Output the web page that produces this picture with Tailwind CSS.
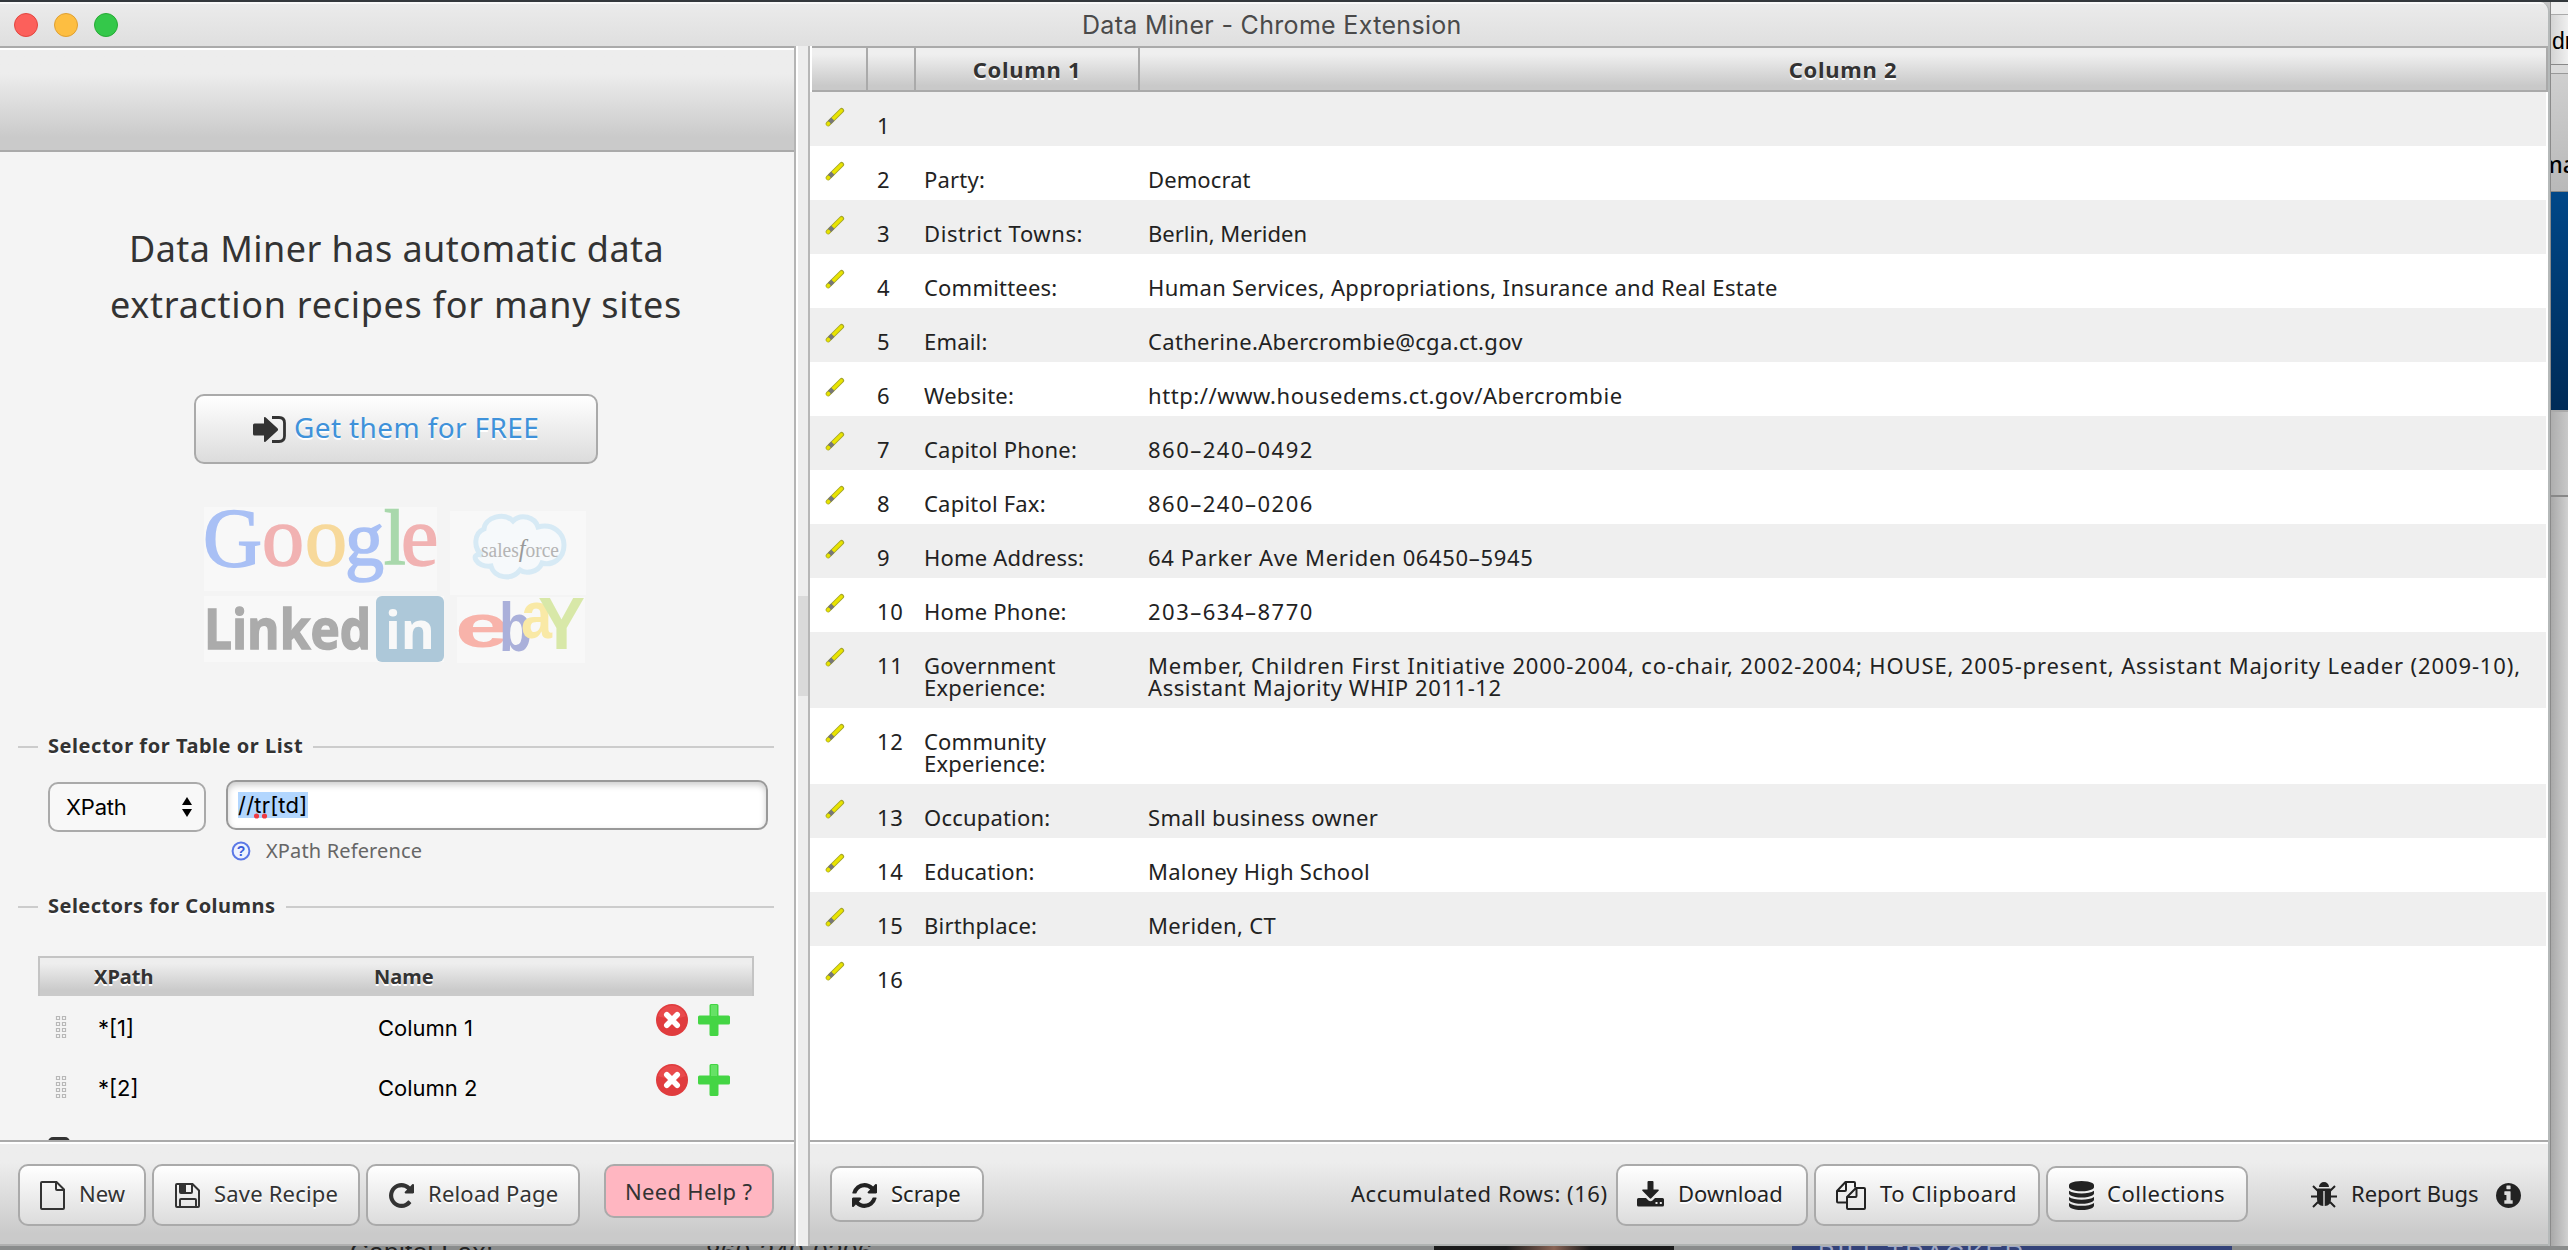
<!DOCTYPE html>
<html lang="en">
<head>
<meta charset="utf-8">
<title>Data Miner - Chrome Extension</title>
<script src="https://cdn.jsdelivr.net/npm/@tailwindcss/browser@4"></script>
</head>
<body class="relative flex h-[1250px] w-[2568px] flex-col overflow-hidden bg-[#33383c] font-['Noto_Sans',sans-serif] text-[22px] leading-[30px] text-[#333]">
<svg class="hidden">
  <symbol id="pencil" viewBox="0 0 20 20">
    <path d="M3.2 16.8L16.6 3.4" stroke="#a5a528" stroke-width="5" stroke-linecap="round" />
    <path d="M7 13L16.4 3.6" stroke="#e9e400" stroke-width="3.2" stroke-linecap="round" />
    <path d="M4.6 15.4L7.8 12.2" stroke="#777" stroke-width="4.6" />
    <path d="M3 17L3.6 16.4" stroke="#e6e200" stroke-width="3.2" stroke-linecap="round" />
  </symbol>
  <symbol id="remove" viewBox="0 0 32 32">
    <circle cx="16" cy="16" r="16" fill="#e03c3e" />
    <path d="M2 12a14.6 14.6 0 0 1 28 0Q16 18 2 12z" fill="#ee5457" opacity=".6" />
    <path d="M10.800 10.800l10.400 10.400M21.200 10.800L10.800 21.200" stroke="#fff" stroke-width="5.600" stroke-linecap="round" />
  </symbol>
  <symbol id="add" viewBox="0 0 32 32">
    <path d="M13 0h6q1.500 0 1.500 1.500v10h10q1.500 0 1.500 1.500v6q0 1.500-1.500 1.500h-10v10q0 1.500-1.500 1.500h-6q-1.500 0-1.500-1.500v-10h-10q-1.500 0-1.500-1.500v-6q0-1.500 1.500-1.500h10v-10q0-1.500 1.500-1.500z" fill="#44d544" />
    <path d="M13 1h6v11h-6z" fill="#66e266" />
  </symbol>
  <symbol id="grip" viewBox="0 0 12 24">
    <g fill="#f8f8f8" stroke="#b8b8b8" stroke-width="1.200">
      <path d="M1.500 1.500h3v3h-3zM7.500 1.500h3v3h-3zM1.500 7.500h3v3h-3zM7.500 7.500h3v3h-3zM1.500 13.500h3v3h-3zM7.500 13.500h3v3h-3zM1.500 19.500h3v3h-3zM7.500 19.500h3v3h-3z" />
    </g>
  </symbol>
</svg>

<div class="mt-[2px] flex h-[1244px] shrink-0 bg-[#c4c4c4]">
  <!-- application window -->
  <div class="flex w-[2550px] shrink-0 flex-col overflow-hidden rounded-tr-[10px] border-r-2 border-[#b5b9b9] bg-[#ededed]">
    <div class="flex h-[44px] shrink-0 items-center border-t-2 border-[#f8f8f8] bg-linear-to-b from-[#ebebeb] to-[#dfdfdf] pl-[14px]">
      <div class="flex gap-4">
        <span class="size-6 rounded-full border border-[#e2463f] bg-[#fc605b]"></span>
        <span class="size-6 rounded-full border border-[#dfa032] bg-[#fdbe41]"></span>
        <span class="size-6 rounded-full border border-[#27aa35] bg-[#34c84a]"></span>
      </div>
      <div class="ml-[964px] font-['Inter',sans-serif] text-[25px] tracking-[0.32px] text-[#4a4a4a]">Data Miner - Chrome Extension</div>
    </div>

    <div class="flex h-[1200px] shrink-0">
      <!-- recipe pane -->
      <div class="flex w-[796px] shrink-0 flex-col border-r-2 border-[#b4b4b4] bg-[#f4f4f4]">
        <div class="h-[106px] shrink-0 border-y-2 border-[#aaa] bg-linear-to-b from-[#ededed] from-25% to-[#cacaca] to-88%"><div class="h-[2px] bg-white"></div></div>
        <div class="flex h-[988px] shrink-0 flex-col overflow-hidden">
          <div class="flex h-[228px] shrink-0 flex-col items-center pt-[69px] text-center text-[36px] leading-[56px]">
            <div class="w-[536px] whitespace-nowrap text-left tracking-[0.44px]">Data Miner has automatic data</div>
            <div class="w-[574px] whitespace-nowrap text-left tracking-[0.72px]">extraction recipes for many sites</div>
          </div>
          <div class="mt-[14px] ml-[194px] flex h-[70px] w-[404px] shrink-0 items-center rounded-[10px] border-2 border-[#aaa] bg-linear-to-b from-white to-[#dcdcdc] pl-[57px] [text-shadow:0_2px_0_#fff]">
            <svg class="h-[27px] w-[33px]" viewBox="0 0 33 27" fill="#333"><path d="M1.500 7.500h9.500V2q0-1.500 1.500-.8l12 11q1.200 1.300 0 2.600l-12 11q-1.500.700-1.500-.8v-5.500H1.500Q0 19.500 0 18V9q0-1.500 1.500-1.500z" /><path d="M19 1.500h7q5.500 0 5.500 5.500v13q0 5.500-5.500 5.500h-7" fill="none" stroke="#333" stroke-width="2.800" /></svg>
            <span class="ml-[8px] pb-1 text-[28px] tracking-[0.38px] whitespace-nowrap text-[#3f92da]">Get them for FREE</span>
          </div>

          <svg class="mt-[40px] ml-[200px] h-[164px] w-[390px] shrink-0" viewBox="200 504 390 164">
            <g fill="#f8f8f8"><path d="M204 507h233v84H204zM450 511h136v84H450zM204 596h240v66H204zM457 597h128v66H457z" /></g>
            <g font-family="Liberation Serif,serif" font-size="84" stroke-width="1.600">
              <text x="203" y="567" fill="#a9c0f5" stroke="#a9c0f5" textLength="59" lengthAdjust="spacingAndGlyphs" font-size="85">G</text>
              <text x="262" y="565" fill="#f1b2b2" stroke="#f1b2b2">o</text><text x="305" y="565" fill="#f7d99b" stroke="#f7d99b">o</text>
              <text x="345" y="565" fill="#a9c0f5" stroke="#a9c0f5" font-size="78">g</text><text x="384" y="564" fill="#a9d8ac" stroke="#a9d8ac" font-size="78">l</text>
              <text x="401" y="565" fill="#f1b2b2" stroke="#f1b2b2">e</text>
            </g>
            <path d="M482 552c-9-7-8-22 2-26c1-12 20-17 29-8c8-8 22-4 25 6c15-4 26 6 26 18c0 14-12 21-22 18c-4 10-17 11-22 7c-8 11-26 8-29-4c-15 2-22-14-9-11z" transform="translate(0 3)" fill="#f6f9fb" stroke="#d7eaf5" stroke-width="5" />
            <text x="481" y="557" font-family="Liberation Serif,serif" font-size="20" fill="#b4b4b4" textLength="78" lengthAdjust="spacingAndGlyphs">sales<tspan font-style="italic" font-size="25" fill="#999">f</tspan>orce</text>
            <text x="204" y="649" font-family="Open Sans,sans-serif" font-weight="700" font-size="55" fill="#ababab" stroke="#ababab" stroke-width="1.500" textLength="167" lengthAdjust="spacingAndGlyphs">Linked</text>
            <rect x="376" y="596" width="68" height="66" rx="6" fill="#adc8d9" />
            <text x="385" y="649" font-family="Open Sans,sans-serif" font-weight="700" font-size="52" fill="#f8f8f8" textLength="50" lengthAdjust="spacingAndGlyphs">in</text>
            <g font-family="Liberation Sans,sans-serif" font-weight="700">
              <text x="455" y="647" font-size="61" fill="#f8b3aa" textLength="54" lengthAdjust="spacingAndGlyphs">e</text>
              <text x="499" y="651" font-size="68" fill="#aab0da" textLength="33" lengthAdjust="spacingAndGlyphs">b</text>
              <text x="521" y="638" font-size="66" fill="#f9e9a6" textLength="31" lengthAdjust="spacingAndGlyphs">a</text>
              <text x="538" y="649" font-size="74" fill="#d8e8a8" textLength="47" lengthAdjust="spacingAndGlyphs">Y</text>
            </g>
          </svg>

          <div class="mt-[64px] ml-[18px] flex h-[30px] w-[756px] shrink-0 items-center text-[20px] font-bold">
            <span class="h-[2px] w-[20px] bg-[#ccc]"></span>
            <span class="mx-[10px] w-[255px] pb-[2px] tracking-[0.54px] whitespace-nowrap [text-shadow:0_2px_0_#fff]">Selector for Table or List</span>
            <span class="h-[2px] flex-1 bg-[#ccc]"></span>
          </div>
          <div class="mt-[18px] ml-[48px] flex shrink-0 font-['Inter',sans-serif] text-black">
            <div class="mt-[2px] flex h-[50px] w-[158px] items-center justify-between rounded-[10px] border-2 border-[#aaa] bg-[#f8f8f8] pr-[12px] pl-[16px] tracking-[-0.2px]">XPath
              <svg class="h-[20px] w-[10px]" viewBox="0 0 10 20"><path d="M5 0l5 8H0zM5 20l5-8H0z" /></svg>
            </div>
            <div class="ml-[20px] flex h-[50px] w-[542px] items-center rounded-[10px] border-2 border-[#999] bg-white pl-[10px] shadow-[inset_0_3px_6px_#ccc]">
              <span class="relative h-[26px] w-[70px] bg-[#b2d6fe] leading-[27px] whitespace-nowrap tracking-[0.2px]">//tr[td]<svg class="absolute top-[21px] left-[15px] h-[6px] w-[16px]" viewBox="0 0 16 6" fill="#ef3b42"><circle cx="3.500" cy="3" r="2.600" /><circle cx="11.500" cy="3" r="2.600" /></svg></span>
            </div>
          </div>
          <div class="mt-[4px] ml-[231px] flex h-[30px] shrink-0 items-center text-[20px] text-[#666]">
            <svg class="h-[20px] w-[20px]" viewBox="0 0 20 20"><circle cx="10" cy="10" r="8.400" fill="#eef3ff" stroke="#5b78e6" stroke-width="2" /><text x="10" y="15" text-anchor="middle" font-family="Liberation Sans,sans-serif" font-size="14" font-weight="700" fill="#3c5cd8">?</text></svg>
            <span class="ml-[15px] tracking-[0.14px]">XPath Reference</span>
          </div>
          <div class="mt-[26px] ml-[18px] flex h-[30px] w-[756px] shrink-0 items-center text-[20px] font-bold">
            <span class="h-[2px] w-[20px] bg-[#ccc]"></span>
            <span class="mx-[10px] w-[228px] pb-[2px] tracking-[0.46px] whitespace-nowrap [text-shadow:0_2px_0_#fff]">Selectors for Columns</span>
            <span class="h-[2px] flex-1 bg-[#ccc]"></span>
          </div>
          <div class="mt-[34px] ml-[38px] grid h-[40px] w-[716px] shrink-0 grid-cols-[280px_1fr] items-center border-2 border-b-0 border-[#c4c4c4] bg-linear-to-b from-[#eee] from-15% to-[#cacaca] to-85% pl-[54px] text-[20px] font-bold [text-shadow:0_2px_0_#fff]">
            <span>XPath</span><span>Name</span>
          </div>
          <div class="ml-[38px] flex h-[60px] w-[716px] shrink-0 items-start pl-[17px] font-['Inter',sans-serif] text-black">
            <svg class="mt-[19px] h-6 w-3"><use href="#grip" /></svg>
            <span class="mt-[17px] ml-[31px] w-[280px]">*[1]</span><span class="mt-[17px] w-[278px]">Column 1</span>
            <svg class="mt-2 size-8"><use href="#remove" /></svg><svg class="mt-2 ml-[10px] size-8"><use href="#add" /></svg>
          </div>
          <div class="ml-[38px] flex h-[60px] w-[716px] shrink-0 items-start pl-[17px] font-['Inter',sans-serif] text-black">
            <svg class="mt-[19px] h-6 w-3"><use href="#grip" /></svg>
            <span class="mt-[17px] ml-[31px] w-[280px]">*[2]</span><span class="mt-[17px] w-[278px]">Column 2</span>
            <svg class="mt-2 size-8"><use href="#remove" /></svg><svg class="mt-2 ml-[10px] size-8"><use href="#add" /></svg>
          </div>
          <div class="mt-[21px] ml-[48px] h-[24px] w-[22px] shrink-0 rounded-[5px] bg-[#333]"></div>
        </div>
        <div class="h-[106px] shrink-0 border-y-2 border-t-[#aaa] border-b-[#b0b0b0] bg-linear-to-b from-[#ededed] from-20% to-[#cacaca] to-90%">
          <div class="h-[2px] bg-white"></div>
          <div class="mt-[20px] flex pl-[18px] [text-shadow:0_2px_0_#fff]">
            <div class="flex h-[62px] w-[128px] items-center rounded-[10px] border-2 border-[#aaa] bg-linear-to-b from-white to-[#dcdcdc] pl-[20px]">
              <svg class="h-[29px] w-[25px]" viewBox="0 0 25 29" fill="none" stroke="#333" stroke-width="2"><path d="M2 1h14.500L24 8.500V27q0 1-1 1H2q-1 0-1-1V2q0-1 1-1zM16 1v7q0 1 1 1h7" /></svg>
              <span class="ml-[14px] pb-1">New</span>
            </div>
            <div class="ml-[6px] flex h-[62px] w-[208px] items-center rounded-[10px] border-2 border-[#aaa] bg-linear-to-b from-white to-[#dcdcdc] pl-[21px]">
              <svg class="h-[25px] w-[25px]" viewBox="0 0 25 25" fill="none" stroke="#333" stroke-width="2"><path d="M2 1h15.500L24 7.500V23q0 1-1 1H2q-1 0-1-1V2q0-1 1-1z" /><path d="M5 1v8q0 1 1 1h10q1 0 1-1V1M5 24v-7q0-1 1-1h14q1 0 1 1v7" /><path d="M5.500 1h5.500v8.500H5.500z" fill="#333" stroke="none" /></svg>
              <span class="ml-[14px] pb-1 tracking-[0.2px] whitespace-nowrap">Save Recipe</span>
            </div>
            <div class="ml-[6px] flex h-[62px] w-[214px] items-center rounded-[10px] border-2 border-[#aaa] bg-linear-to-b from-white to-[#dcdcdc] pl-[21px]">
              <svg class="h-[25px] w-[25px]" viewBox="128 128 1536 1536" fill="#333"><path d="M1664 256v448q0 26-19 45t-45 19h-448q-42 0-59-40-17-39 14-69l138-138q-148-137-349-137-104 0-198.500 40.500t-163.500 109.500-109.500 163.500-40.500 198.500 40.500 198.500 109.500 163.500 163.500 109.500 198.500 40.500q119 0 225-52t179-147q7-10 23-12 15 0 25 9l137 138q9 8 9.500 20.500t-7.500 22.500q-109 132-264 204.500t-327 72.500q-156 0-298-61t-245-164-164-245-61-298 61-298 164-245 245-164 298-61q147 0 284.500 55.500t244.500 156.500l130-129q29-31 70-14 39 17 39 59z" /></svg>
              <span class="ml-[14px] pb-1 tracking-[0.2px] whitespace-nowrap">Reload Page</span>
            </div>
            <div class="ml-[24px] flex h-[54px] w-[170px] items-center rounded-[10px] border-2 border-[#aaa] bg-[#ffb6c1] pl-[19px] [text-shadow:none]"><span class="tracking-[0.3px] whitespace-nowrap">Need Help ?</span></div>
          </div>
        </div>
      </div>

      <!-- splitter -->
      <div class="flex w-[14px] shrink-0 flex-col border-r-2 border-l-2 border-l-white border-r-[#b6b6b6] bg-[#ededed]">
        <div class="mt-[550px] h-[100px] bg-[#dadada]"></div>
      </div>

      <!-- results pane -->
      <div class="flex w-[1738px] shrink-0 flex-col bg-white">
        <div class="ml-[2px] grid h-[46px] w-[1736px] shrink-0 grid-cols-[56px_48px_224px_1fr] border-y-2 border-r-2 border-[#aaa] bg-linear-to-b from-[#efefef] from-15% to-[#c9c9c9] to-90% text-center font-bold leading-[43px] [text-shadow:0_2px_0_#fff]">
          <span class="border-r-2 border-[#aaa]"></span><span class="border-r-2 border-[#aaa]"></span>
          <span class="border-r-2 border-[#aaa] tracking-[0.7px]">Column 1</span><span class="tracking-[0.7px]">Column 2</span>
        </div>
        <div id="rows" class="h-[1048px] w-[1736px] shrink-0 overflow-hidden text-[#222]"></div>
        <div class="h-[106px] shrink-0 border-y-2 border-t-[#aaa] border-b-[#b0b3b2] bg-linear-to-b from-[#ededed] from-20% to-[#cacaca] to-90% text-[#222]">
          <div class="h-[2px] bg-white"></div>
          <div class="mt-[20px] flex h-[62px] items-center pl-[20px] [text-shadow:0_2px_0_#fff]">
            <div class="mb-[2px] flex h-[56px] w-[154px] items-center rounded-[10px] border-2 border-[#aaa] bg-linear-to-b from-white to-[#dcdcdc] pl-[20px]">
              <svg class="mt-[2px] h-[25px] w-[25px]" viewBox="128 128 1536 1536" fill="#222"><path d="M1639 1056q0 5-1 7-64 268-268 434.500t-478 166.500q-146 0-282.500-55t-243.500-157l-129 129q-19 19-45 19t-45-19-19-45v-448q0-26 19-45t45-19h448q26 0 45 19t19 45-19 45l-137 137q71 66 161 102t187 36q134 0 250-65t186-179q11-17 53-117 8-23 30-23h192q13 0 22.500 9.500t9.500 22.500zm25-800v448q0 26-19 45t-45 19h-448q-26 0-45-19t-19-45 19-45l138-138q-148-137-349-137-134 0-250 65t-186 179q-11 17-53 117-8 23-30 23h-199q-13 0-22.500-9.500t-9.500-22.500v-7q65-268 270-434.500t480-166.500q146 0 284 55.500t245 156.500l130-129q19-19 45-19t45 19 19 45z" /></svg>
              <span class="ml-[14px] pb-[2px]">Scrape</span>
            </div>
            <span class="ml-[367px] w-[256px] pb-1 tracking-[0.53px] whitespace-nowrap [text-shadow:none]">Accumulated Rows: (16)</span>
            <div class="ml-[9px] flex h-[62px] w-[192px] items-center rounded-[10px] border-2 border-[#aaa] bg-linear-to-b from-white to-[#dcdcdc] pl-[19px]">
              <svg class="mb-[3px] h-[26px] w-[27px]" viewBox="0 0 27 26" fill="#222"><path d="M10.500 1q0-1 1-1h4q1 0 1 1v7.500h4.700q1.200.3.400 1.300l-7.300 7.500q-.800.700-1.600 0L5.400 9.800q-.8-1 .4-1.300h4.700zM1.500 17h7.500l2.500 2.500q2 1.500 4 0L18 17h7.500q1.500 0 1.500 1.500V24q0 1.500-1.500 1.500h-24Q0 25.500 0 24v-5.500Q0 17 1.500 17z" /><path d="M18.500 21h2v2h-2zM22.800 21h2v2h-2z" fill="#ececec" /></svg>
              <span class="ml-[14px] pb-1">Download</span>
            </div>
            <div class="ml-[6px] flex h-[62px] w-[226px] items-center rounded-[10px] border-2 border-[#aaa] bg-linear-to-b from-white to-[#dcdcdc] pl-[20px]">
              <svg class="h-[29px] w-[30px]" viewBox="0 0 30 29" fill="none" stroke="#222" stroke-width="2" stroke-linejoin="round"><path d="M11 21.500H2q-1 0-1-1V10L9.500 1H18q1 0 1 1v4.500M10 1v8q0 1-1 1H1" /><path d="M20 7h8q1 0 1 1v19q0 1-1 1H12q-1 0-1-1V16zM20.500 7v8q0 1-1 1H11" /></svg>
              <span class="ml-[14px] pb-1 tracking-[0.6px] whitespace-nowrap">To Clipboard</span>
            </div>
            <div class="mb-[2px] ml-[6px] flex h-[56px] w-[202px] items-center rounded-[10px] border-2 border-[#aaa] bg-linear-to-b from-white to-[#dcdcdc] pl-[21px]">
              <svg class="mt-[3px] h-[29px] w-[25px]" viewBox="128 0 1536 1792" preserveAspectRatio="none" fill="#222"><path d="M896 768q237 0 443-43t325-127v170q0 69-103 128t-280 93.500-385 34.500-385-34.500-280-93.500-103-128v-170q119 84 325 127t443 43zm0 768q237 0 443-43t325-127v170q0 69-103 128t-280 93.500-385 34.500-385-34.500-280-93.500-103-128v-170q119 84 325 127t443 43zm0-384q237 0 443-43t325-127v170q0 69-103 128t-280 93.500-385 34.500-385-34.500-280-93.500-103-128v-170q119 84 325 127t443 43zm0-1152q208 0 385 34.500t280 93.500 103 128v128q0 69-103 128t-280 93.500-385 34.500-385-34.500-280-93.500-103-128v-128q0-69 103-128t280-93.500 385-34.500z" /></svg>
              <span class="ml-[13px] pb-[2px] tracking-[0.5px]">Collections</span>
            </div>
            <svg class="ml-[63px] h-[26px] w-[26px]" viewBox="0 0 26 26" fill="#222"><path d="M8 5a5 5 0 0 1 10 0zM6 7.500q0-1 1-1h12q1 0 1 1V17q0 7-6.300 7V9h-1.400v15Q6 24 6 17z" /><path d="M7 9L2 4M19 9l5-5M6 14.500H0M20 14.500h6M7 20l-5 5M19 20l5 5" stroke="#222" stroke-width="2" /></svg>
            <span class="ml-[14px] w-[127px] pb-1 whitespace-nowrap [text-shadow:none]">Report Bugs</span>
            <svg class="ml-[18px] h-[25px] w-[25px]" viewBox="128 128 1536 1536" fill="#222"><path d="M1152 1376v-160q0-14-9-23t-23-9h-96v-512q0-14-9-23t-23-9h-320q-14 0-23 9t-9 23v160q0 14 9 23t23 9h96v320h-96q-14 0-23 9t-9 23v160q0 14 9 23t23 9h448q14 0 23-9t9-23zm-128-896v-160q0-14-9-23t-23-9h-192q-14 0-23 9t-9 23v160q0 14 9 23t23 9h192q14 0 23-9t9-23zm640 416q0 209-103 385.500t-279.500 279.500-385.500 103-385.500-103-279.500-279.500-103-385.500 103-385.500 279.500-279.500 385.500-103 385.500 103 279.500 279.500 103 385.500z" /></svg>
          </div>
        </div>
      </div>
    </div>
  </div>

  <!-- browser window behind, right edge -->
  <div class="flex w-[18px] flex-col overflow-hidden border-l border-[#8b8b8b] bg-linear-to-r from-[#a9a9a9] to-[#d0d0d0] font-['Liberation_Sans',sans-serif] text-[23px] text-black">
    <div class="h-[13px] shrink-0 border-b border-[#aaa] bg-[#efefef]"></div>
    <div class="h-[50px] shrink-0 overflow-hidden border-b border-[#888] bg-linear-to-r from-[#d4d4d4] to-[#efefef] pt-[11px] pl-px whitespace-nowrap">dr</div>
    <div class="h-[9px] shrink-0 border-b border-[#999] bg-[#dadada]"></div>
    <div class="h-[118px] shrink-0 overflow-hidden border-b border-[#888] bg-linear-to-b from-[#cfcfcf] to-[#b9b9b9] pt-[75px] whitespace-nowrap"><span class="-ml-[10px] font-['Noto_Sans',sans-serif] font-medium">ma</span></div>
    <div class="h-[218px] shrink-0 bg-linear-to-b from-[#004788] to-[#002b57]"></div>
    <div class="h-[87px] shrink-0 border-t-2 border-b-2 border-t-[#aaa] border-b-[#888] bg-linear-to-r from-[#aeaeae] to-[#c8c8c8]"></div>
  </div>
</div>

<!-- page behind, bottom edge -->
<div class="flex h-[4px] shrink-0 items-start overflow-hidden bg-[#8a8c8c] font-['Liberation_Sans',sans-serif] text-[26px] leading-[26px] text-[#222]">
  <span class="-mt-[7px] ml-[350px] w-[356px] shrink-0 tracking-[0.4px]">Capitol Fax:</span>
  <span class="-mt-[7px] w-[378px] shrink-0 tracking-[0.4px]">860-240-0206</span>
  <span class="ml-[350px] h-full w-[240px] shrink-0 bg-linear-to-r from-[#1b1b1b] from-30% via-[#8a6455] to-[#1b1b1b] to-65%"></span>
  <span class="ml-[118px] flex h-full w-[440px] shrink-0 items-start overflow-hidden bg-[#334279] pl-[26px] text-[#a0a8c4]"><span class="-mt-[5px] tracking-[2px] whitespace-nowrap">BILL TRACKER</span></span>
</div>

<script>
const rows = [
  ["", ""], ["Party:", "Democrat", "tracking-[0.1px]"], ["District Towns:", "Berlin, Meriden", "tracking-[0px]"],
  ["Committees:", "Human Services, Appropriations, Insurance and Real Estate"],
  ["Email:", "Catherine.Abercrombie@cga.ct.gov"],
  ["Website:", "http://www.housedems.ct.gov/Abercrombie", "tracking-[0.58px]"],
  ["Capitol Phone:", "860–240–0492", "tracking-[1.5px]"], ["Capitol Fax:", "860–240–0206", "tracking-[1.5px]"],
  ["Home Address:", "64 Parker Ave Meriden 06450–5945", "tracking-[0.65px]"],
  ["Home Phone:", "203–634–8770", "tracking-[1.5px]"],
  ["Government Experience:", "Member, Children First Initiative 2000-2004, co-chair, 2002-2004; HOUSE, 2005-present, Assistant Majority Leader (2009-10),<br><span class=\"tracking-[0.58px]\">Assistant Majority WHIP 2011-12</span>", "tracking-[0.87px]"],
  ["Community Experience:", ""], ["Occupation:", "Small business owner"],
  ["Education:", "Maloney High School", "tracking-[0.25px]"], ["Birthplace:", "Meriden, CT"], ["", ""]
];
document.getElementById("rows").innerHTML = rows.map(([name, value, spacing = "tracking-[0.33px]"], i) => `
  <div class="grid min-h-[54px] grid-cols-[66px_48px_224px_1fr] pb-[10px] leading-[22px] ${i % 2 ? "bg-white" : "bg-[#efefef]"}">
    <svg class="mt-[15px] ml-[15px] size-[20px]"><use href="#pencil" /></svg>
    <span class="pt-[22px] pl-px tracking-[0.7px]">${i + 1}</span>
    <span class="w-[180px] pt-[22px] ${name === "District Towns:" ? "tracking-[0.6px]" : "tracking-[0.2px]"}">${name}</span>
    <span class="pt-[22px] whitespace-nowrap ${spacing}">${value}</span>
  </div>`).join("");
</script>
</body>
</html>
